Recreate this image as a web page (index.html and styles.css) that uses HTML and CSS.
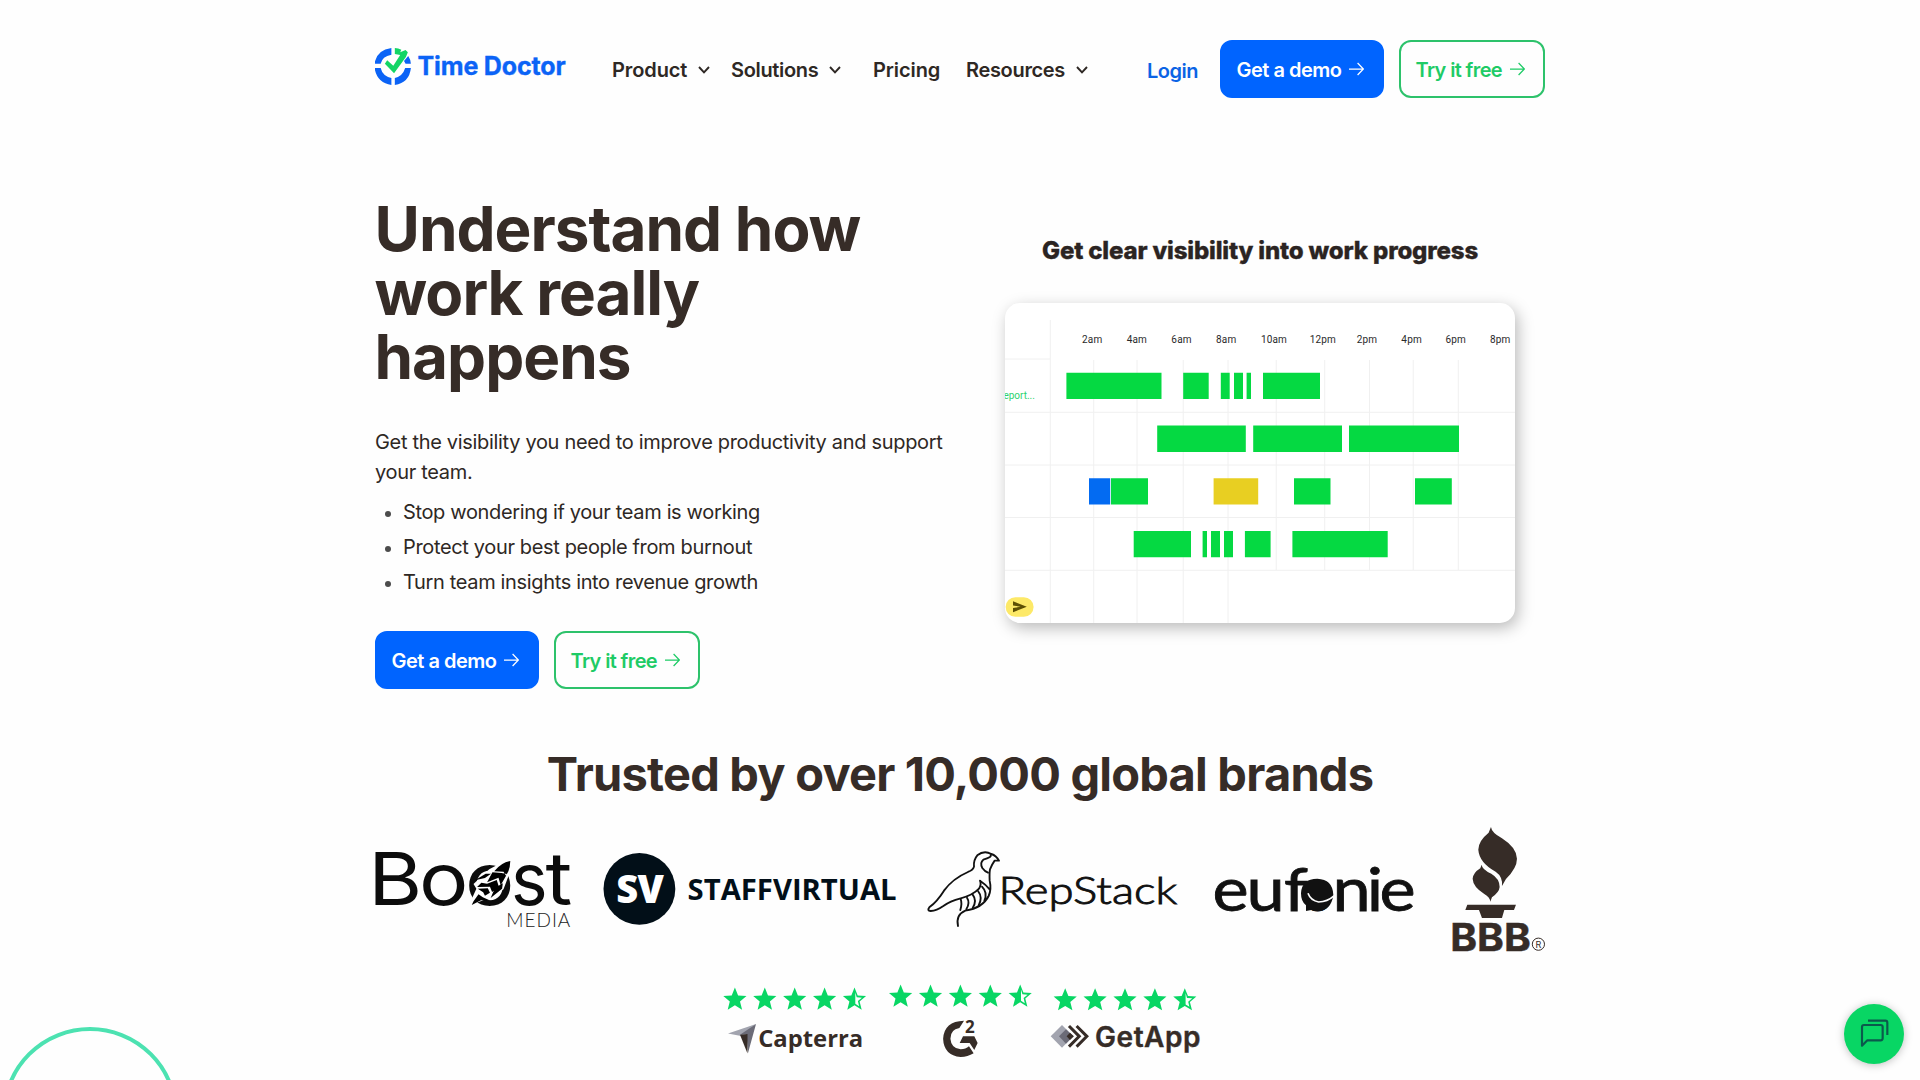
FILE: index.html
```html
<!DOCTYPE html>
<html lang="en">
<head>
<meta charset="utf-8">
<title>Time Doctor</title>
<link rel="stylesheet" href="styles.css">
</head>
<body>
<svg class="defs" aria-hidden="true">
  <symbol id="chev" viewBox="0 0 12 8"><path d="M1 1l5 5.4L11 1" fill="none" stroke="currentColor" stroke-width="1.9"/></symbol>
  <symbol id="arrow" viewBox="0 0 15 14"><path d="M0 7h14.2M8.6 1l5.8 6-5.8 6" fill="none" stroke="currentColor" stroke-width="1.25"/></symbol>
  <g id="star"><path d="M0-12.2L3.2-4.3 11.6-3.8 5.1 1.7 7.2 9.9 0 5.5-7.2 9.9-5.1 1.7-11.6-3.8-3.2-4.3Z"/></g>
  <g id="stars">
    <use href="#star"/><use href="#star" x="29.9"/><use href="#star" x="59.8"/><use href="#star" x="89.7"/><use href="#star" x="119.6"/>
    <path d="M120.4-7.4L121.8-2.5 127-2.1 123 1.3 124.2 6.4 120.4 4Z" fill="#fefefe"/>
  </g>
</svg>
<div class="page">
  <div class="ring"></div>
  <header class="header">
    <a class="brand">
      <svg width="192" height="44" viewBox="375 44 192 44">
        <g transform="translate(360 20) scale(.3827 .3333)">
          <path fill="#0b63f6" d="M82 84V104Q58 109 54 131H38Q43 90 82 84ZM38 144H54Q59 168 82 174V195Q44 189 38 144ZM91 195V174Q112 168 118 144H133Q129 188 91 195ZM115 123L126 108Q132 118 133 131H119Z"/>
          <path fill="#12d565" d="M91 84Q100 84 108 89L105 97 119 90 125 97 120 111 89 160 65 131 71 121 87 137 105 105 91 102Z"/>
        </g>
        <text class="brand-text" x="417.6" y="75.4" textLength="148">Time Doctor</text>
      </svg>
    </a>
    <a class="nav">Product <svg class="chev"><use href="#chev"/></svg></a>
    <a class="nav tight">Solutions <svg class="chev"><use href="#chev"/></svg></a>
    <a class="nav">Pricing</a>
    <a class="nav tight">Resources <svg class="chev"><use href="#chev"/></svg></a>
    <a class="nav login">Login</a>
    <div class="buttons">
      <a class="btn demo"><span>Get a demo</span><svg class="arrow"><use href="#arrow"/></svg></a>
      <a class="btn free"><span>Try it free</span><svg class="arrow"><use href="#arrow"/></svg></a>
    </div>
  </header>

  <main>
    <section class="hero">
      <div class="copy">
        <h1>Understand how<br>work really<br>happens</h1>
        <p>Get the visibility you need to improve productivity and support your team.</p>
        <ul>
          <li>Stop wondering if your team is working</li>
          <li>Protect your best people from burnout</li>
          <li>Turn team insights into revenue growth</li>
        </ul>
        <div class="buttons">
          <a class="btn demo"><span>Get a demo</span><svg class="arrow"><use href="#arrow"/></svg></a>
          <a class="btn free"><span>Try it free</span><svg class="arrow"><use href="#arrow"/></svg></a>
        </div>
      </div>
      <div class="visual">
        <h2>Get clear visibility into work progress</h2>
        <svg class="chart" width="510" height="320" viewBox="0 0 510 320">
          <path d="M45.3 17V320M88.7 57V320M132 57V320M178.2 57V320M223 57V320M271.2 57V267M319.7 57V267M364.5 57V267M408.2 57V267M453.3 57V267M0 56H45M0 109.3H510M0 162H510M0 214.5H510M0 267.3H510" stroke="#f0f0f0" fill="none"/>
          <g class="hours">
            <text x="87.2" y="40.2">2am</text><text x="131.8" y="40.2">4am</text><text x="176.5" y="40.2">6am</text><text x="221.2" y="40.2">8am</text><text x="269" y="40.2">10am</text><text x="317.8" y="40.2">12pm</text><text x="362" y="40.2">2pm</text><text x="406.6" y="40.2">4pm</text><text x="450.7" y="40.2">6pm</text><text x="495.2" y="40.2">8pm</text>
          </g>
          <text class="report" x="-1.6" y="96.4">eport...</text>
          <g fill="#05d942">
            <path d="M61.4 69.7H156.5V96H61.4ZM178.2 69.7H203.7V96H178.2ZM215.8 69.7H224.7V96H215.8ZM229 69.7H238V96H229ZM241.6 69.7H246V96H241.6ZM258 69.7H315V96H258Z"/>
            <path d="M152.2 122.5H240.8V149H152.2ZM248.2 122.5H337V149H248.2ZM344 122.5H454V149H344Z"/>
            <path d="M106 175.2H143V201.6H106ZM289 175.2H325.5V201.6H289ZM410 175.2H446.8V201.6H410Z"/>
            <path d="M128.7 228H186V254.2H128.7ZM197.6 228H202V254.2H197.6ZM206 228H215V254.2H206ZM219 228H228V254.2H219ZM239.9 228H265.6V254.2H239.9ZM287.4 228H382.7V254.2H287.4Z"/>
          </g>
          <path fill="#036bf2" d="M84 175.2H105.2V201.6H84Z"/>
          <path fill="#e8cf22" d="M208.6 175.2H253.2V201.6H208.6Z"/>
          <rect x=".6" y="294.2" width="28" height="19.6" rx="9.8" fill="#fde968"/>
          <path fill="#5d4f04" d="M8 298.2L21.8 303.8 8 309.2V305.1L15.5 303.8 8 302.5Z"/>
        </svg>
      </div>
    </section>

    <section class="trusted">
      <h2>Trusted by over 10,000 global brands</h2>
      <div class="logos">
        <svg width="228" height="126" viewBox="375 826 228 126">
          <g class="boost">
            <text transform="scale(1.13 1)" x="325.8 370.8 411.4" y="905">Boo</text>
            <text transform="translate(511 905) scale(.95 1)">s</text>
            <text transform="translate(545.6 905) scale(1.12 1)">t</text>
          </g>
          <g transform="translate(360 740) scale(.357 .3333)">
            <path d="M426 360L400 366 362 388 318 432 326 446 304 498 352 478 402 448 418 402Z" fill="#fefefe"/>
            <path d="M421 363Q395 368 376 394L402 395 409 407Q421 388 421 363ZM371 397L396 399 412 402 394 436 388 413 356 427ZM352 401H367L350 414 322 421ZM356 431L383 420 389 440 370 456 364 440 328 441 340 428ZM330 446L358 445 364 458 350 467 345 457ZM400 430L398 446 366 474 378 444ZM332 463L318 484 313 495 339 481 366 482 344 472Z"/>
          </g>
          <text class="media" x="506.3" y="926.7" textLength="64">MEDIA</text>
        </svg>
        <svg width="324" height="126" viewBox="603 826 324 126">
          <circle cx="639.4" cy="888.9" r="35.9" fill="#020f18"/>
          <text class="sv" x="616.2" y="903" textLength="47.6">SV</text>
          <text class="staff" x="687.6" y="900" textLength="209" lengthAdjust="spacingAndGlyphs">STAFFVIRTUAL</text>
        </svg>
        <svg width="287" height="126" viewBox="927 826 287 126">
          <g transform="translate(900 820) scale(.3333)" fill="none" stroke="#111" stroke-width="5.6" stroke-linecap="round" stroke-linejoin="round">
            <path d="M174 318Q167 284 196 272Q248 264 266 228Q275 208 269 182Q268 160 270 148Q276 133 284 122L297 122Q289 107 274 102Q252 90 232 106Q220 120 222 140Q220 150 204 156Q158 176 132 212Q112 244 88 262Q80 272 92 273Q110 272 130 258Q150 243 182 235Q218 226 237 206Q245 194 240 182Q258 194 269 208"/>
            <path d="M272 105Q276 112 250 119Q239 128 247 144Q254 154 264 158M182 237Q187 250 181 270M201 233Q211 248 199 268M218 224Q232 242 218 264M234 213Q249 232 236 256M246 200Q264 218 253 243"/>
          </g>
          <text class="rep" x="998.6" y="904.3" textLength="178.5" lengthAdjust="spacingAndGlyphs">RepStack</text>
        </svg>
        <svg width="238" height="126" viewBox="1214 826 238 126">
          <text class="euf" transform="scale(1.14 1)" x="1063.6 1093.4 1126.4 1144.6 1168.8 1198.8 1210.2" y="910.8">euf<tspan font-size="40">o</tspan>nie</text>
          <g transform="translate(1190 810) scale(.3333)">
            <path d="M348 303V286Q333 275 333 250Q335 206 382 206Q428 208 430 254Q424 302 382 304Q370 304 364 300Z" fill="#111"/>
            <path d="M354 250Q362 272 386 276Q412 276 432 258" fill="none" stroke="#fefefe" stroke-width="5"/>
          </g>
        </svg>
        <svg width="93" height="126" viewBox="1452 826 93 126">
          <g transform="translate(1190 810) scale(.3333)" fill="#362c27">
            <path d="M903 51Q905 68 936 85Q980 113 981 146Q981 174 948 207L936 228Q939 200 917 185Q868 158 865 119Q865 93 896 68ZM875 164Q876 178 904 191Q929 206 929 231Q928 246 906 262L901 275Q900 262 883 252Q849 230 848 206Q850 188 871 175ZM832 284H978L972 300H943L936 324H876L867 300H826Z"/>
          </g>
          <text class="bbb" x="1450.2" y="950.6" textLength="80.6" lengthAdjust="spacingAndGlyphs">BBB</text>
          <circle cx="1538.4" cy="944.2" r="6.1" fill="none" stroke="#362c27"/>
          <text class="reg" x="1535.5" y="947.6">R</text>
        </svg>
      </div>
      <div class="ratings">
        <svg width="160" height="84" viewBox="720 976 160 84">
          <use href="#stars" x="734.9" y="999.8" fill="#08d664"/>
          <path fill="#a2a4af" d="M728 1033.5L756 1024 741 1036Z"/><path fill="#6b6b77" d="M756 1024L748 1053 746.5 1034.5 740 1034.8Z"/><path fill="#362c27" d="M740 1034.8L747.5 1034 747.5 1053.5Z"/>
          <text class="cap" x="758.2" y="1047.4" textLength="105" lengthAdjust="spacingAndGlyphs">Capterra</text>
        </svg>
        <svg width="165" height="84" viewBox="880 976 165 84">
          <use href="#stars" x="900.6" y="996.8" fill="#08d664"/>
          <g transform="translate(701 960) scale(.33167 .3333)" fill="#362c27">
            <path d="M793 182L779 204Q752 208 752 236Q754 265 783 268Q798 268 808 259L822 280Q804 291 783 291Q732 286 730 236Q733 184 793 182ZM790 229H824L834 249 824 270 810 249H780Z"/>
          </g>
          <text class="two" x="965" y="1032.8">2</text>
        </svg>
        <svg width="155" height="84" viewBox="1045 976 155 84">
          <use href="#stars" x="1065.2" y="1000.4" fill="#08d664"/>
          <g transform="translate(701.8 960) scale(.33167 .3333)">
            <path fill="#a2a4af" d="M1086 195L1120 229 1086 263 1052 229Z"/>
            <path fill="#6b6b77" d="M1098 208L1120 229 1098 251 1077 229Z"/>
            <path fill="#362c27" d="M1110 218L1122 229 1110 240 1100 229Z"/>
            <path fill="none" stroke="#362c27" stroke-width="9" d="M1107 198L1138 229 1107 260M1130 198L1161 229 1130 260"/>
          </g>
          <text class="getapp" x="1095" y="1046.8" textLength="105.5">GetApp</text>
        </svg>
      </div>
    </section>
  </main>
  <div class="chat">
    <svg width="60" height="60" viewBox="72 72 180 180" fill="none" stroke="#0b5a4c" stroke-width="6.5" stroke-linejoin="round"><path d="M126 197V141a6 6 0 0 1 6-6H182a6 6 0 0 1 6 6V175a6 6 0 0 1-6 6H142ZM144 122H196a6 6 0 0 1 6 6V165"/></svg>
  </div>
</div>
</body>
</html>
```
FILE: styles.css
```css
body { margin: 0; background: #fefefe; color: #362c27; font-family: Inter, "Liberation Sans", sans-serif; font-size: 20px; }
.defs { display: block; width: 0; height: 0; position: absolute; }
.page { position: relative; width: 1920px; height: 1080px; overflow: hidden; }
.header, main { width: 1170px; margin: 0 auto; }

.header { display: grid; grid-template-columns: 237px 119px 142px 93px 181px 73px auto; padding-top: 40px; height: 58px; align-items: center; }
.brand { align-self: start; margin-top: 4px; height: 44px; }
.brand-text { font-size: 25px; font-weight: 700; fill: #0b63f6; stroke: #0b63f6; stroke-width: .35px; }
.nav { display: flex; align-items: center; gap: 11px; padding-top: 2px; font-weight: 600; color: #2e2824; letter-spacing: -0.1px; line-height: 24px; }
.nav.tight { letter-spacing: -0.33px; }
.nav.login { color: #0b63e5; letter-spacing: -0.5px; padding-top: 4px; }
.chev { width: 12px; height: 8px; margin-bottom: 1px; }

.buttons { display: flex; gap: 15px; }
.btn { box-sizing: border-box; height: 58px; border: 2px solid; border-radius: 12px; display: flex; align-items: center; justify-content: space-between; font-weight: 600; }
.btn span { padding-top: 2px; }
.demo { width: 164px; padding: 0 18px 0 14.5px; border-color: #0064ff; background: #0064ff; color: #fff; letter-spacing: -0.5px; }
.free { width: 146px; padding: 0 18px 0 14.5px; border-color: #2dc26b; color: #1ecb66; letter-spacing: -0.62px; }
.arrow { width: 15px; height: 14px; margin-bottom: 1px; }

.hero { display: flex; height: 648px; }
.copy { width: 630px; padding-top: 99px; }
h1 { margin: 0 0 38px -0.5px; font-size: 62px; line-height: 64px; font-weight: 700; letter-spacing: -1px; }
.copy p { margin: 0; width: 580px; line-height: 30px; letter-spacing: -0.32px; color: #2e2824; }
.copy ul { margin: 8px 0 31px; padding-left: 28px; line-height: 35px; letter-spacing: -0.35px; color: #2e2824; }
.copy li::marker { color: #4c4c4c; font-size: 18px; }
.visual { width: 510px; padding-top: 137px; }
.visual h2 { margin: 0; height: 68px; text-align: center; font-size: 24px; line-height: 32px; font-weight: 800; letter-spacing: -0.16px; color: #2b2422; white-space: nowrap; -webkit-text-stroke: .35px #2b2422; }
.chart { display: block; border-radius: 15px; background: #fff; box-shadow: 3px 5px 16px rgba(0, 0, 0, .27); }
.hours { font: 10px Roboto, sans-serif; fill: #2a2a2a; text-anchor: middle; letter-spacing: .15px; }
.report { font: 10px Roboto, sans-serif; fill: #2dd36f; }

.trusted h2 { margin: 0; text-align: center; font-size: 47px; line-height: 56px; font-weight: 700; letter-spacing: -0.79px; white-space: nowrap; }
.logos { display: flex; margin-top: 24px; }
.logos svg, .ratings svg { display: block; overflow: visible; }
.boost { font: 400 73px Inter, sans-serif; fill: #0c0c0c; }
.media { font: 300 19px Lato, sans-serif; fill: #222; }
.sv { font: 800 38px "Open Sans", sans-serif; fill: #fff; }
.staff { font: 700 28.5px "Open Sans", sans-serif; fill: #020f18; }
.rep { font: 300 37px Lato, sans-serif; fill: #111; stroke: #111; stroke-width: .9px; }
.euf { font: 400 60px Lato, sans-serif; fill: #111; stroke: #111; stroke-width: .8px; }
.bbb { font: 700 38px Inter, sans-serif; fill: #362c27; stroke: #362c27; stroke-width: .5px; }
.reg { font: 400 9px Inter, sans-serif; fill: #362c27; }
.ratings { display: flex; justify-content: center; margin-top: 24px; }
.cap { font: 700 24px "Open Sans", sans-serif; fill: #362c27; }
.two { font: 700 17px "Open Sans", sans-serif; fill: #362c27; }
.getapp { font: 600 28px Inter, sans-serif; fill: #362c27; stroke: #362c27; stroke-width: .4px; }

.ring { position: absolute; left: 1.5px; top: 1026.5px; width: 168px; height: 168px; border: 4px solid #4ce2b1; border-radius: 50%; }
.chat { position: absolute; left: 1844px; top: 1004px; width: 60px; height: 60px; border-radius: 50%; background: #08d664; box-shadow: 0 1px 8px rgba(0, 0, 0, .25); }
```
